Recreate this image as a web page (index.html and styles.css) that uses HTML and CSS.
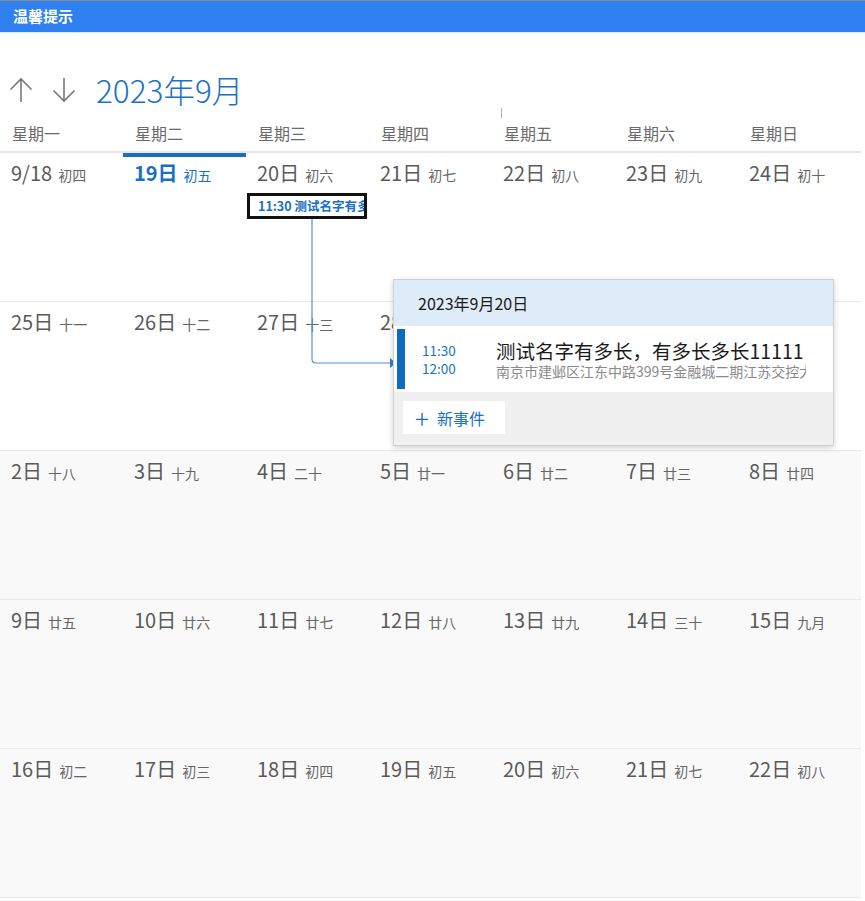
FILE: index.html
```html
<!DOCTYPE html>
<html lang="zh">
<head>
<meta charset="utf-8">
<title>温馨提示</title>
<link rel="stylesheet" href="styles.css">
</head>
<body>
<div class="app">
  <div class="titlebar">温馨提示</div>
  <div class="toolbar">
    <svg class="nav" width="24" height="26" viewBox="0 0 24 26"><path d="M12 2 V25 M1.5 12.5 L12 2 L22.5 12.5" fill="none" stroke="#7a7a7a" stroke-width="1.6"/></svg>
    <svg class="nav" width="24" height="26" viewBox="0 0 24 26"><path d="M12 1 V24 M1.5 13.5 L12 24 L22.5 13.5" fill="none" stroke="#7a7a7a" stroke-width="1.6"/></svg>
    <span class="month">2023年9月</span>
  </div>
  <div class="caret-row"><span class="caret"></span></div>
  <div class="weekdays">
    <div>星期一</div><div>星期二</div><div>星期三</div><div>星期四</div><div>星期五</div><div>星期六</div><div>星期日</div>
  </div>
  <div class="grid">
    <div class="cell"><span class="d">9/18</span><span class="l">初四</span></div>
    <div class="cell today"><span class="d">19日</span><span class="l">初五</span></div>
    <div class="cell"><span class="d">20日</span><span class="l">初六</span>
      <div class="chip">11:30 测试名字有多长，有多长多长11111</div>
    </div>
    <div class="cell"><span class="d">21日</span><span class="l">初七</span></div>
    <div class="cell"><span class="d">22日</span><span class="l">初八</span></div>
    <div class="cell"><span class="d">23日</span><span class="l">初九</span></div>
    <div class="cell"><span class="d">24日</span><span class="l">初十</span></div>

    <div class="cell"><span class="d">25日</span><span class="l">十一</span></div>
    <div class="cell"><span class="d">26日</span><span class="l">十二</span></div>
    <div class="cell"><span class="d">27日</span><span class="l">十三</span></div>
    <div class="cell"><span class="d">28日</span><span class="l">十四</span></div>
    <div class="cell"><span class="d">29日</span><span class="l">十五</span></div>
    <div class="cell"><span class="d">30日</span><span class="l">十六</span></div>
    <div class="cell"><span class="d">10/1</span><span class="l">十七</span></div>

    <div class="cell other"><span class="d">2日</span><span class="l">十八</span></div>
    <div class="cell other"><span class="d">3日</span><span class="l">十九</span></div>
    <div class="cell other"><span class="d">4日</span><span class="l">二十</span></div>
    <div class="cell other"><span class="d">5日</span><span class="l">廿一</span></div>
    <div class="cell other"><span class="d">6日</span><span class="l">廿二</span></div>
    <div class="cell other"><span class="d">7日</span><span class="l">廿三</span></div>
    <div class="cell other"><span class="d">8日</span><span class="l">廿四</span></div>

    <div class="cell other"><span class="d">9日</span><span class="l">廿五</span></div>
    <div class="cell other"><span class="d">10日</span><span class="l">廿六</span></div>
    <div class="cell other"><span class="d">11日</span><span class="l">廿七</span></div>
    <div class="cell other"><span class="d">12日</span><span class="l">廿八</span></div>
    <div class="cell other"><span class="d">13日</span><span class="l">廿九</span></div>
    <div class="cell other"><span class="d">14日</span><span class="l">三十</span></div>
    <div class="cell other"><span class="d">15日</span><span class="l">九月</span></div>

    <div class="cell other"><span class="d">16日</span><span class="l">初二</span></div>
    <div class="cell other"><span class="d">17日</span><span class="l">初三</span></div>
    <div class="cell other"><span class="d">18日</span><span class="l">初四</span></div>
    <div class="cell other"><span class="d">19日</span><span class="l">初五</span></div>
    <div class="cell other"><span class="d">20日</span><span class="l">初六</span></div>
    <div class="cell other"><span class="d">21日</span><span class="l">初七</span></div>
    <div class="cell other"><span class="d">22日</span><span class="l">初八</span></div>
  </div>

  <svg class="connector" width="90" height="150" viewBox="0 0 90 150">
    <path d="M2 0 V140 Q2 144 6 144 H82" fill="none" stroke="#4a94dc" stroke-width="1.2"/>
    <path d="M80 139 L86 144 L80 149 Z" fill="#2f7fd0"/>
  </svg>

  <div class="popup">
    <div class="pop-head">2023年9月20日</div>
    <div class="pop-event">
      <div class="bar"></div>
      <div class="times"><div>11:30</div><div>12:00</div></div>
      <div class="info">
        <div class="ev-title">测试名字有多长，有多长多长11111</div>
        <div class="ev-addr">南京市建邺区江东中路399号金融城二期江苏交控大厦</div>
      </div>
    </div>
    <div class="pop-foot">
      <div class="newbtn"><span class="plus">+</span><span>新事件</span></div>
    </div>
  </div>
</div>
</body>
</html>
```

FILE: styles.css
```css
html, body {
  margin: 0;
  padding: 0;
  background: #ffffff;
}
body {
  font-family: "Noto Sans CJK SC", "Noto Sans", sans-serif;
  color: #606060;
}
.app {
  position: relative;
  width: 865px;
  height: 901px;
  overflow: hidden;
}
.titlebar {
  border-top: 1px solid #8a8a8a;
  height: 31px;
  background: #2f80f0;
  color: #ffffff;
  font-weight: 700;
  font-size: 15px;
  line-height: 29px;
  padding-left: 13px;
  border-bottom: 1px solid #d6e6fb;
}
.toolbar {
  display: flex;
  align-items: center;
  height: 36px;
  margin-top: 38px;
  padding-left: 9px;
  gap: 19px;
}
.nav {
  display: block;
  margin-top: 2px;
}
.month {
  margin-left: 1px;
  font-size: 31.5px;
  font-weight: 300;
  color: #1c72c6;
  line-height: 36px;
}
.caret-row {
  position: relative;
  height: 0;
}
.caret {
  position: absolute;
  left: 501px;
  top: 1px;
  width: 1px;
  height: 10px;
  background: #b0b0b0;
}
.weekdays {
  display: grid;
  grid-template-columns: repeat(7, 123px);
  width: 861px;
  height: 35px;
  border-bottom: 2px solid #e7e7e7;
  box-sizing: border-box;
  margin-top: 11px;
}
.weekdays div {
  padding-left: 12px;
  font-size: 16px;
  line-height: 30px;
  color: #6a6a6a;
}
.grid {
  display: grid;
  grid-template-columns: repeat(7, 123px);
  grid-auto-rows: 149px;
  width: 861px;
}
.cell {
  position: relative;
  box-sizing: border-box;
  border-bottom: 1px solid #e8e8e8;
  padding: 6px 0 0 11px;
  background: #ffffff;
  white-space: nowrap;
}
.cell.other {
  background: #f9f9f9;
}
.d {
  font-size: 20px;
  color: #5a5a5a;
  line-height: 28px;
}
.l {
  font-size: 14px;
  color: #666666;
  margin-left: 6px;
}
.today {
  border-top: 4px solid #1a6fc4;
  padding-top: 2px;
}
.today .d {
  color: #1a6fc4;
  font-weight: 700;
}
.today .l {
  color: #1a6fc4;
}
.chip {
  margin: 6px 0 0 -10px;
  width: 106px;
  height: 20px;
  border: 3px solid #111111;
  background: #ffffff;
  color: #1a6fc4;
  font-weight: 700;
  font-size: 12.5px;
  line-height: 20px;
  padding-left: 8px;
  overflow: hidden;
  white-space: nowrap;
  box-sizing: content-box;
}
.connector {
  position: absolute;
  left: 310px;
  top: 219px;
}
.popup {
  position: absolute;
  left: 393px;
  top: 279px;
  width: 439px;
  background: #f0f0f0;
  border: 1px solid #d0d0d0;
  box-shadow: 0 2px 6px rgba(0, 0, 0, 0.18);
}
.pop-head {
  height: 46px;
  background: #deecf9;
  color: #1a1a1a;
  font-size: 16px;
  line-height: 46px;
  padding-left: 24px;
}
.pop-event {
  display: flex;
  background: #ffffff;
  height: 66px;
  align-items: center;
  padding-left: 3px;
}
.bar {
  width: 8px;
  height: 60px;
  background: #0f6cbd;
}
.times {
  width: 74px;
  padding-left: 17px;
  color: #1a6fc4;
  font-size: 13.5px;
  line-height: 18px;
}
.info {
  width: 310px;
  overflow: hidden;
  white-space: nowrap;
}
.ev-title {
  font-size: 19.5px;
  color: #1a1a1a;
  line-height: 25px;
}
.ev-addr {
  font-size: 14px;
  color: #8a8a8a;
  line-height: 17px;
}
.pop-foot {
  height: 53px;
  padding: 9px 0 0 9px;
  box-sizing: border-box;
}
.newbtn {
  display: inline-flex;
  align-items: center;
  gap: 8px;
  height: 33px;
  width: 102px;
  box-sizing: border-box;
  padding-left: 12px;
  background: #ffffff;
  color: #1a6fc4;
  font-size: 16px;
}
.plus {
  font-size: 26px;
  font-weight: 300;
  line-height: 20px;
}
```
